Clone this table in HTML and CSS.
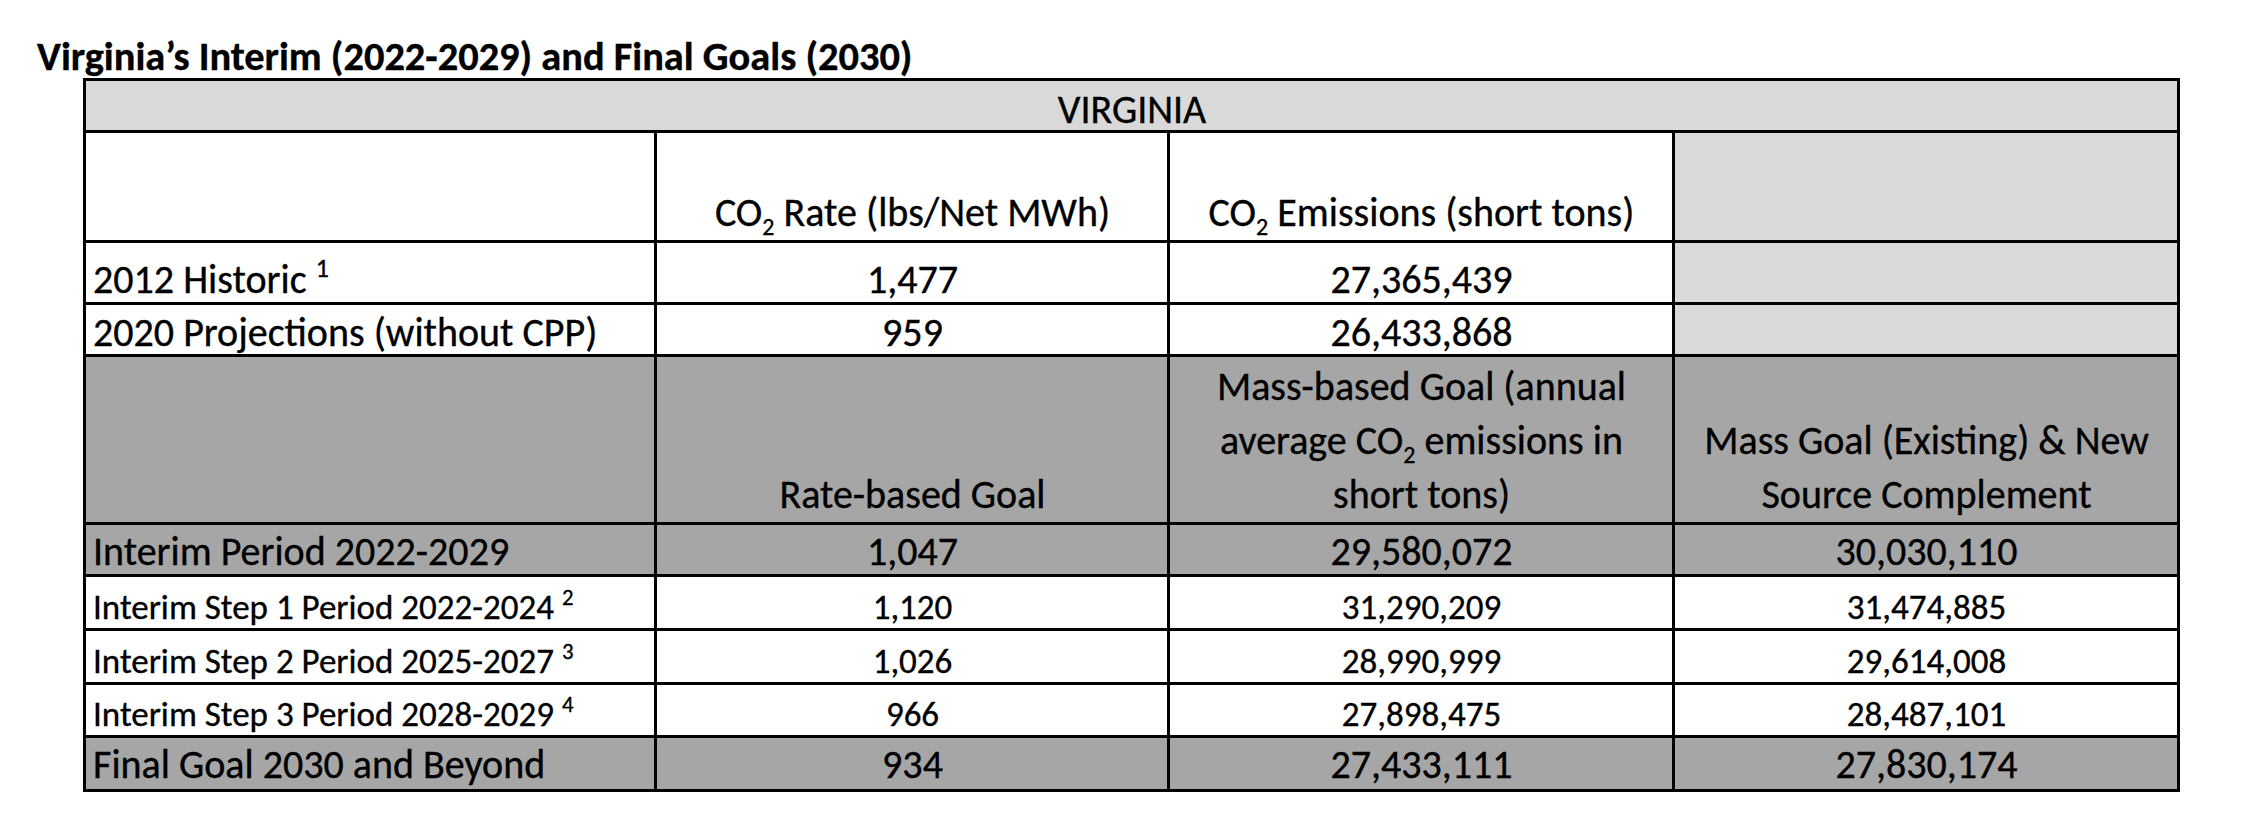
FILE: index.html
```html
<!DOCTYPE html>
<html>
<head>
<meta charset="utf-8">
<title>Virginia’s Interim and Final Goals</title>
<link rel="stylesheet" href="styles.css">
</head>
<body>
<div class="page">
  <h1 class="title">Virginia’s Interim (2022-2029) and Final Goals (2030)</h1>
  <table class="goals">
    <colgroup>
      <col class="col-label">
      <col class="col-rate">
      <col class="col-mass">
      <col class="col-comp">
    </colgroup>
    <tbody>
      <tr class="row-state">
        <td colspan="4" class="light center">VIRGINIA</td>
      </tr>
      <tr class="row-head1">
        <td></td>
        <td class="center">CO<sub>2</sub> Rate (lbs/Net MWh)</td>
        <td class="center">CO<sub>2</sub> Emissions (short tons)</td>
        <td class="light"></td>
      </tr>
      <tr class="row-hist">
        <td>2012 Historic <sup>1</sup></td>
        <td class="center">1,477</td>
        <td class="center">27,365,439</td>
        <td class="light"></td>
      </tr>
      <tr class="row-proj">
        <td>2020 Projections (without CPP)</td>
        <td class="center">959</td>
        <td class="center">26,433,868</td>
        <td class="light"></td>
      </tr>
      <tr class="row-head2 dark">
        <td></td>
        <td class="center">Rate-based Goal</td>
        <td class="center">Mass-based Goal (annual<br>average CO<sub>2</sub> emissions in<br>short tons)</td>
        <td class="center">Mass Goal (Existing) &amp; New<br>Source Complement</td>
      </tr>
      <tr class="row-interim dark">
        <td>Interim Period 2022-2029</td>
        <td class="center">1,047</td>
        <td class="center">29,580,072</td>
        <td class="center">30,030,110</td>
      </tr>
      <tr class="row-step row-step1">
        <td>Interim Step 1 Period 2022-2024 <sup>2</sup></td>
        <td class="center">1,120</td>
        <td class="center">31,290,209</td>
        <td class="center">31,474,885</td>
      </tr>
      <tr class="row-step row-step2">
        <td>Interim Step 2 Period 2025-2027 <sup>3</sup></td>
        <td class="center">1,026</td>
        <td class="center">28,990,999</td>
        <td class="center">29,614,008</td>
      </tr>
      <tr class="row-step row-step3">
        <td>Interim Step 3 Period 2028-2029 <sup>4</sup></td>
        <td class="center">966</td>
        <td class="center">27,898,475</td>
        <td class="center">28,487,101</td>
      </tr>
      <tr class="row-final dark">
        <td>Final Goal 2030 and Beyond</td>
        <td class="center">934</td>
        <td class="center">27,433,111</td>
        <td class="center">27,830,174</td>
      </tr>
    </tbody>
  </table>
</div>
</body>
</html>
```
FILE: styles.css
```css
html, body {
  margin: 0;
  padding: 0;
  background: #ffffff;
}

.page {
  padding: 37px 0 0 37px;
  font-family: "Carlito", "Calibri", "Lato", sans-serif;
  color: #000;
  -webkit-text-stroke: 0.35px #000;
}

.title {
  margin: 0 0 1px 0;
  font-size: 40.4px;
  line-height: 40px;
  font-weight: 700;
}

.goals {
  margin-left: 46px;
  width: 2097px;
  table-layout: fixed;
  border-collapse: separate;
  border-spacing: 0;
  border-top: 3px solid #000;
  border-left: 3px solid #000;
}

.col-label { width: 571px; }
.col-rate { width: 513px; }
.col-mass { width: 505px; }
.col-comp { width: 505px; }

.goals td {
  box-sizing: border-box;
  border-right: 3px solid #000;
  border-bottom: 3px solid #000;
  padding: 0 6px 2px 7px;
  font-size: 40px;
  line-height: 40px;
  vertical-align: bottom;
  white-space: nowrap;
  background: #ffffff;
}

.goals td.center { text-align: center; }
.goals td.light { background: #d9d9d9; }
.goals tr.dark td { background: #a6a6a6; }

.row-state td { height: 52px; padding-bottom: 0; }
.row-head1 td { height: 110px; padding-bottom: 7px; }
.row-hist td { height: 62px; padding-bottom: 2px; }
.row-proj td { height: 52px; padding-bottom: 1px; }
.row-head2 td { height: 168px; line-height: 54px; padding-bottom: 0; }
.row-interim td { height: 52px; padding-bottom: 2px; }
.row-step td { font-size: 35px; line-height: 35px; padding-bottom: 3px; }
.row-step1 td { height: 54px; }
.row-step2 td { height: 54px; }
.row-step3 td { height: 53px; }
.row-final td { height: 54px; padding-bottom: 4px; }

sub {
  font-size: 0.6em;
  line-height: 0;
  vertical-align: -0.38em;
}

sup {
  font-size: 0.65em;
  line-height: 0;
  vertical-align: 0.6em;
}
```
